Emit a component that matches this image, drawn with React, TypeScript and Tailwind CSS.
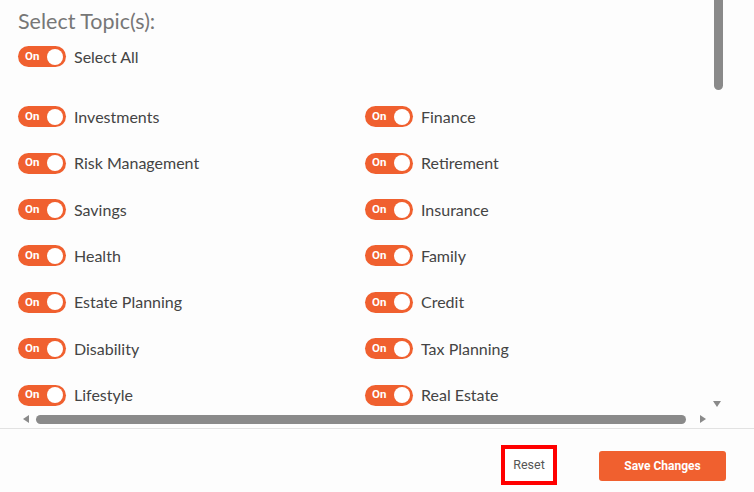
import React from "react";

const left = ["Investments", "Risk Management", "Savings", "Health", "Estate Planning", "Disability", "Lifestyle"];
const right = ["Finance", "Retirement", "Insurance", "Family", "Credit", "Tax Planning", "Real Estate"];

function Toggle() {
  return (
    <div className="flex h-[21px] w-[48px] shrink-0 items-center justify-between rounded-full bg-[#f0602f] pl-[7px] pr-[3px]">
      <span className="text-[11.5px] font-bold leading-none text-white" style={{ fontFamily: "Roboto, sans-serif" }}>On</span>
      <span className="h-[16px] w-[16px] rounded-full bg-white" />
    </div>
  );
}

function Row({ label }: { label: string }) {
  return (
    <div className="flex h-[21px] items-center gap-[8px]">
      <Toggle />
      <span className="text-[16px] text-[#444]">{label}</span>
    </div>
  );
}

export default function App() {
  const rows = left.map((l, i) => [l, right[i]]);
  return (
    <div className="h-[492px] w-[754px] overflow-hidden bg-[#fdfdfd]" style={{ fontFamily: "Lato, sans-serif" }}>
      <div className="relative h-[429px] border-b border-[#e2e2e2]">
        <div className="pl-[18px] pt-[6px]">
          <h2 className="text-[21.5px] leading-[30px] text-[#777]">Select Topic(s):</h2>
          <div className="mt-[10px]">
            <Row label="Select All" />
          </div>
          <div className="mt-[39.3px] flex flex-col gap-[25.4px]">
            {rows.map(([a, b]) => (
              <div key={a} className="grid grid-cols-[347px_1fr]">
                <Row label={a} />
                <Row label={b} />
              </div>
            ))}
          </div>
        </div>
        {/* vertical scrollbar */}
        <div className="absolute left-[714px] top-0 h-[90px] w-[9px] rounded-b-full bg-[#8a8a8a]" />
        <div className="absolute left-[713px] top-[401px] h-0 w-0 border-l-[4.5px] border-r-[4.5px] border-t-[6px] border-l-transparent border-r-transparent border-t-[#8a8a8a]" />
        {/* horizontal scrollbar */}
        <div className="absolute left-[23px] top-[415px] h-0 w-0 border-b-[4.5px] border-r-[6px] border-t-[4.5px] border-b-transparent border-t-transparent border-r-[#8a8a8a]" />
        <div className="absolute left-[36px] top-[415px] h-[9px] w-[650px] rounded-full bg-[#8a8a8a]" />
        <div className="absolute left-[700px] top-[415px] h-0 w-0 border-b-[4.5px] border-l-[6px] border-t-[4.5px] border-b-transparent border-t-transparent border-l-[#8a8a8a]" />
      </div>
      <div className="flex h-[63px] items-start justify-end pr-[28px] pt-[16px]" style={{ fontFamily: "Roboto, sans-serif" }}>
        <div className="flex h-[40px] w-[56px] items-center justify-center border-[4px] border-[#ff0000] bg-white text-[12.5px] text-[#555]">
          Reset
        </div>
        <button className="ml-[42px] mt-[6px] h-[30px] w-[127px] rounded-[3px] bg-[#f0602f] text-[12px] font-bold text-white">
          Save Changes
        </button>
      </div>
    </div>
  );
}
